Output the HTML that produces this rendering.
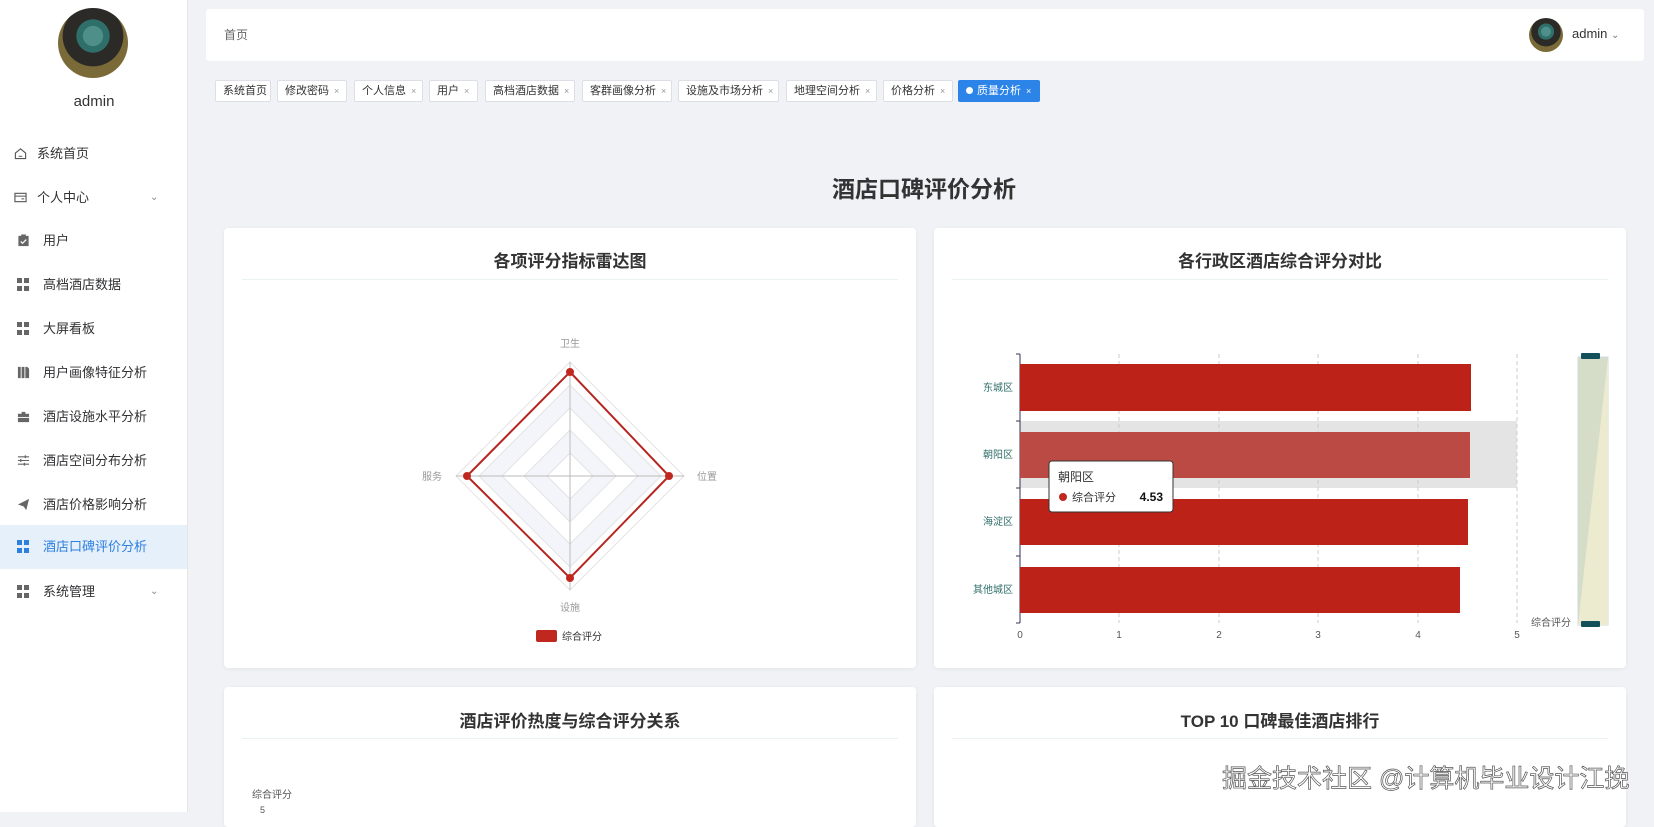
<!DOCTYPE html>
<html><head><meta charset="utf-8"><style>
*{margin:0;padding:0;box-sizing:border-box}
body{width:1654px;height:812px;overflow:hidden;background:#f0f2f5;font-family:"Liberation Sans","Noto Sans CJK SC",sans-serif;position:relative;color:#303133}
.abs{position:absolute}
#side{left:0;top:0;width:188px;height:812px;background:#fff;border-right:1px solid #e6e6e6}
.mi{position:absolute;left:0;width:187px;height:44px;font-size:13px;color:#303133;line-height:44px}
.mi .ic{position:absolute;left:17px;top:15px;width:13px;height:13px}
.mi span{position:absolute;left:43px}
.mi.act{background:#e6f0fb;color:#2d7fe0}
.grid4{display:grid;grid-template-columns:5px 5px;gap:2px}
.grid4 i{display:block;width:5px;height:5px;background:#666}
.tag{position:absolute;top:80px;height:22px;border:1px solid #dcdfe6;background:#fff;font-size:11px;color:#333;line-height:20px;padding-left:7px;border-radius:2px}
.tag b{font-weight:normal;color:#999;font-size:9px;margin-left:5px}
.card{position:absolute;background:#fff;border-radius:4px;box-shadow:0 1px 4px rgba(0,0,0,.06)}
.ct{position:absolute;left:0;right:0;text-align:center;font-size:17px;font-weight:bold;color:#333}
.cl{position:absolute;left:18px;right:18px;height:1px;background:#e8f2f0}
.av{background:radial-gradient(circle at 50% 40%,#4f8f8a 0 18%,#2f6f6a 19% 30%,#2b2a26 31% 55%,#7a6a38 56%)}
</style></head><body>
<div id="side" class="abs">
 <div class="abs av" style="left:58px;top:8px;width:70px;height:70px;border-radius:50%"></div>
 <div class="abs" style="left:0;width:188px;top:93px;text-align:center;font-size:15px;color:#333">admin</div>
 <div class="mi" style="top:132px"><svg class="ic" viewBox="0 0 14 14" style="left:14px"><path d="M1.5 6.5L7 2l5.5 4.5V12.5H1.5Z" fill="none" stroke="#555" stroke-width="1.2"/><path d="M5 10h4" stroke="#555"/></svg><span style="left:37px">系统首页</span></div>
 <div class="mi" style="top:176px"><svg class="ic" viewBox="0 0 14 14" style="left:14px"><rect x="1" y="2.5" width="12" height="9" fill="none" stroke="#555" stroke-width="1.2"/><path d="M1 5.5h12M8 8.5h3" stroke="#555"/></svg><span style="left:37px">个人中心</span><span style="left:150px;color:#888;font-size:10px">&#8964;</span></div>
 <div class="mi" style="top:219px"><svg class="ic" viewBox="0 0 14 14"><rect x="1.5" y="2" width="11" height="11" fill="#666"/><rect x="4.5" y="0.5" width="5" height="3" fill="#666"/><path d="M4 8l2 2 4-4" stroke="#fff" fill="none" stroke-width="1.3"/></svg><span>用户</span></div>
 <div class="mi" style="top:263px"><div class="ic grid4"><i></i><i></i><i></i><i></i></div><span>高档酒店数据</span></div>
 <div class="mi" style="top:307px"><div class="ic grid4"><i></i><i></i><i></i><i></i></div><span>大屏看板</span></div>
 <div class="mi" style="top:351px"><svg class="ic" viewBox="0 0 14 14"><path d="M1 1h3v12H1zM5 1h3v12H5zM9 1h2l2 2v10H9z" fill="#666"/></svg><span>用户画像特征分析</span></div>
 <div class="mi" style="top:395px"><svg class="ic" viewBox="0 0 14 14"><path d="M5 2h4v2H5zM1 4h12v9H1z" fill="#666"/><path d="M1 8h12" stroke="#fff"/></svg><span>酒店设施水平分析</span></div>
 <div class="mi" style="top:439px"><svg class="ic" viewBox="0 0 14 14"><path d="M1 3h12M1 7h12M1 11h12" stroke="#666" stroke-width="1.2"/><path d="M9 1.5v3M4 5.5v3M8 9.5v3" stroke="#666" stroke-width="1.5"/></svg><span>酒店空间分布分析</span></div>
 <div class="mi" style="top:483px"><svg class="ic" viewBox="0 0 14 14"><path d="M1 7L13 1 10 13 7 9Z" fill="#666"/></svg><span>酒店价格影响分析</span></div>
 <div class="mi act" style="top:525px"><div class="ic grid4"><i style="background:#2d7fe0"></i><i style="background:#2d7fe0"></i><i style="background:#2d7fe0"></i><i style="background:#2d7fe0"></i></div><span>酒店口碑评价分析</span></div>
 <div class="mi" style="top:570px"><div class="ic grid4"><i></i><i></i><i></i><i></i></div><span>系统管理</span><span style="left:150px;color:#888;font-size:10px">&#8964;</span></div>
</div>

<div class="abs" style="left:206px;top:9px;width:1438px;height:52px;background:#fff;border-radius:3px">
 <div class="abs" style="left:18px;top:17px;font-size:12px;color:#666">首页</div>
 <div class="abs av" style="left:1323px;top:9px;width:34px;height:34px;border-radius:50%"></div>
 <div class="abs" style="left:1366px;top:17px;font-size:13px;color:#333">admin <span style="color:#777;font-size:10px">&#8964;</span></div>
</div>

<div class="tag" style="left:215px;width:56px">系统首页</div>
<div class="tag" style="left:277px;width:70px">修改密码<b>×</b></div>
<div class="tag" style="left:354px;width:69px">个人信息<b>×</b></div>
<div class="tag" style="left:429px;width:49px">用户<b>×</b></div>
<div class="tag" style="left:485px;width:90px">高档酒店数据<b>×</b></div>
<div class="tag" style="left:582px;width:90px">客群画像分析<b>×</b></div>
<div class="tag" style="left:678px;width:101px">设施及市场分析<b>×</b></div>
<div class="tag" style="left:786px;width:91px">地理空间分析<b>×</b></div>
<div class="tag" style="left:883px;width:70px">价格分析<b>×</b></div>
<div class="tag" style="left:958px;width:82px;background:#2d84e8;border-color:#2d84e8;color:#fff"><span style="display:inline-block;width:7px;height:7px;border-radius:50%;background:#fff;margin-right:4px"></span>质量分析<b style="color:#fff">×</b></div>

<div class="abs" style="left:0;width:1848px;top:170px;text-align:center;font-size:23px;font-weight:bold;color:#333">酒店口碑评价分析</div>

<div class="card" style="left:224px;top:228px;width:692px;height:440px">
 <div class="ct" style="top:19px">各项评分指标雷达图</div><div class="cl" style="top:51px"></div>
</div>
<div class="card" style="left:934px;top:228px;width:692px;height:440px">
 <div class="ct" style="top:19px">各行政区酒店综合评分对比</div><div class="cl" style="top:51px"></div>
</div>
<div class="card" style="left:224px;top:687px;width:692px;height:140px">
 <div class="ct" style="top:20px">酒店评价热度与综合评分关系</div><div class="cl" style="top:51px"></div>
 <div class="abs" style="left:28px;top:99px;font-size:10px;color:#555">综合评分</div>
 <div class="abs" style="left:36px;top:118px;font-size:9px;color:#555">5</div>
</div>
<div class="card" style="left:934px;top:687px;width:692px;height:140px">
 <div class="ct" style="top:20px">TOP 10 口碑最佳酒店排行</div><div class="cl" style="top:51px"></div>
</div>

<svg class="abs" style="left:0;top:0" width="1654" height="812">
 <g font-size="10" fill="#999" text-anchor="middle" font-family="Liberation Sans,Noto Sans CJK SC,sans-serif">
  <polygon points="570,362 684,476 570,590 456,476" fill="#fff" stroke="#e4e4e4"/>
  <polygon points="570,385 661,476 570,567 479,476" fill="#f3f5fa" stroke="#e4e4e4"/>
  <polygon points="570,408 638,476 570,544 502,476" fill="#fff" stroke="#e4e4e4"/>
  <polygon points="570,430 616,476 570,522 524,476" fill="#f3f5fa" stroke="#e4e4e4"/>
  <polygon points="570,453 593,476 570,499 547,476" fill="#fff" stroke="#e4e4e4"/>
  <path d="M570 362V590M456 476H684" stroke="#bbb"/>
  <polygon points="570,372 669,476 570,578 467,476" fill="none" stroke="#b5251f" stroke-width="2"/>
  <circle cx="570" cy="372" r="4" fill="#c0271f"/><circle cx="669" cy="476" r="4" fill="#c0271f"/><circle cx="570" cy="578" r="4" fill="#c0271f"/><circle cx="467" cy="476" r="4" fill="#c0271f"/>
  <text x="570" y="347">卫生</text><text x="707" y="480">位置</text><text x="432" y="480">服务</text><text x="570" y="611">设施</text>
  <rect x="536" y="630" width="21" height="12" rx="2" fill="#c0271f"/>
  <text x="562" y="640" fill="#333" text-anchor="start">综合评分</text>
 </g>
 <g font-size="10" font-family="Liberation Sans,Noto Sans CJK SC,sans-serif">
  <rect x="1020" y="421" width="497" height="67" fill="#e4e4e4"/>
  <g stroke="#ccc" stroke-dasharray="4,3"><path d="M1119 354V623M1219 354V623M1318 354V623M1418 354V623M1517 354V623"/></g>
  <path d="M1020 354V623M1016 354h4M1016 421h4M1016 488h4M1016 556h4M1016 623h4" stroke="#335" />
  <rect x="1020" y="364" width="451" height="47" fill="#bd2219"/>
  <rect x="1020" y="432" width="450" height="46" fill="#bb4a44"/>
  <rect x="1020" y="499" width="448" height="46" fill="#bd2219"/>
  <rect x="1020" y="567" width="440" height="46" fill="#bd2219"/>
  <g fill="#2f6f6a" text-anchor="end"><text x="1013" y="391">东城区</text><text x="1013" y="458">朝阳区</text><text x="1013" y="525">海淀区</text><text x="1013" y="593">其他城区</text></g>
  <g fill="#555" text-anchor="middle"><text x="1020" y="638">0</text><text x="1119" y="638">1</text><text x="1219" y="638">2</text><text x="1318" y="638">3</text><text x="1418" y="638">4</text><text x="1517" y="638">5</text></g>
  <rect x="1049" y="461" width="124" height="51" rx="3" fill="#fff" stroke="#333"/>
  <text x="1058" y="481" fill="#333" font-size="12">朝阳区</text>
  <circle cx="1063" cy="497" r="4" fill="#c0271f"/>
  <text x="1072" y="501" fill="#333" font-size="11">综合评分</text>
  <text x="1163" y="501" fill="#111" font-size="12" font-weight="bold" text-anchor="end">4.53</text>
  <rect x="1578" y="357" width="30" height="268" fill="#d5dcc8" stroke="#cfd8e3"/>
  <path d="M1578 625 L1608 357 L1608 625Z" fill="#ecebcf"/>
  <rect x="1581" y="353" width="19" height="6" rx="1" fill="#14505a"/>
  <rect x="1581" y="621" width="19" height="6" rx="1" fill="#14505a"/>
  <text x="1571" y="626" fill="#555" text-anchor="end">综合评分</text>
 </g>
 <text x="1222" y="787" font-size="25" fill="#fff" stroke="#555" stroke-width="0.7" font-family="Liberation Sans,Noto Sans CJK SC,sans-serif">掘金技术社区 @计算机毕业设计江挽</text>
</svg>
</body></html>
